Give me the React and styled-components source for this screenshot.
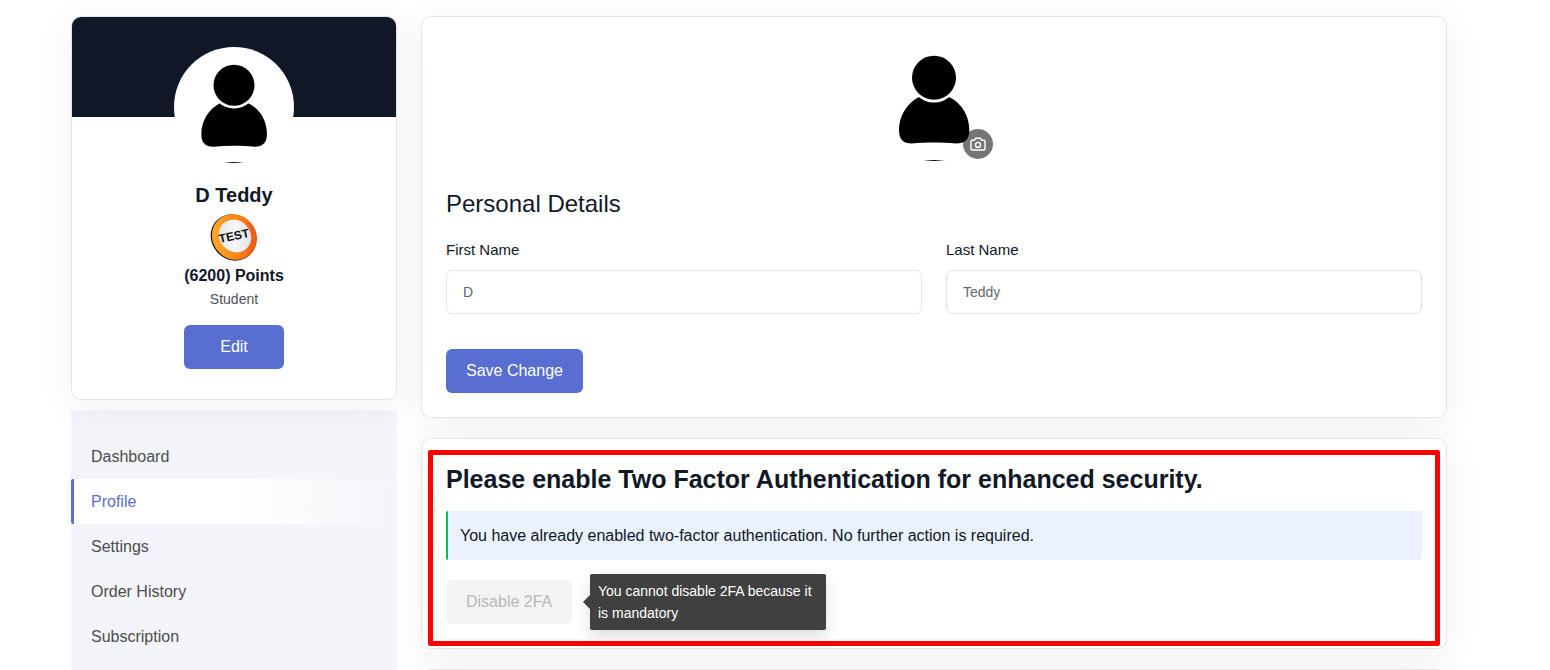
import React, { useId } from "react";
import styled, { createGlobalStyle } from "styled-components";

const GlobalStyle = createGlobalStyle`
  *, *::before, *::after { box-sizing: border-box; }
  body {
    margin: 0;
    background: #fff;
    color: #101828;
    font-family: "Liberation Sans", Arial, sans-serif;
    font-size: 16px;
    line-height: 24px;
  }
  h1, h2, p, ul { margin: 0; padding: 0; }
  button, input { font: inherit; }
`;

const Page = styled.div`
  display: grid;
  grid-template-columns: 326px minmax(0, 1fr);
  gap: 24px;
  align-items: start;
  padding: 16px 103px 0 71px;
`;

const Column = styled.div`
  display: flex;
  flex-direction: column;
  gap: ${(p) => p.$gap}px;
`;

const Card = styled.section`
  position: relative;
  border: 1px solid #e2e4e6;
  border-radius: 10px;
  background: #fff;
  box-shadow: 0 6px 40px rgba(30, 30, 90, 0.06);
`;

const ProfileCard = styled(Card)`
  z-index: 1;
  display: flex;
  flex-direction: column;
  align-items: center;
  padding-bottom: 30px;
  overflow: hidden;
  text-align: center;
`;

const Banner = styled.div`
  align-self: stretch;
  height: 100px;
  background: #101827;
`;

const AvatarRing = styled.div`
  position: relative;
  width: 120px;
  height: 120px;
  margin-top: -70px;
  padding: 4px;
  border-radius: 50%;
  background: #fff;

  svg { display: block; }
`;

const ProfileName = styled.h2`
  margin-top: 16px;
  font-size: 20px;
  line-height: 24px;
`;

const Badge = styled.svg`
  display: block;
  margin-top: 7px;
`;

const Points = styled.p`
  font-weight: 700;
  line-height: 28px;
`;

const Role = styled.p`
  color: #4d5259;
  font-size: 14px;
  line-height: 18px;
`;

const Button = styled.button`
  height: 44px;
  padding: 0 20px;
  border: 0;
  border-radius: 6px;
  background: #586fd1;
  color: #fff;

  &:disabled {
    background: #f4f4f4;
    color: #b8b8b8;
  }
`;

const EditButton = styled(Button)`
  width: 100px;
  margin-top: 17px;
`;

const Menu = styled.nav`
  padding: 24px 0 48px;
  border-radius: 3px;
  background: #f4f5fa;

  ul { list-style: none; }
`;

const MenuLink = styled.a`
  display: block;
  height: 45px;
  padding-left: 17px;
  border-left: 3px solid ${(p) => (p.$active ? "#586fd1" : "transparent")};
  border-radius: 2px;
  background: ${(p) => (p.$active ? "linear-gradient(90deg, #fff 50%, #f4f5fa)" : "none")};
  color: ${(p) => (p.$active ? "#586fd1" : "#4d4d4d")};
  line-height: 45px;
  text-decoration: none;
`;

const DetailsCard = styled(Card)`
  padding: 24px;
`;

const Photo = styled.div`
  position: relative;
  width: 120px;
  height: 120px;
  margin: 0 auto;

  svg { display: block; }
`;

const PhotoButton = styled.button`
  position: absolute;
  right: 1px;
  bottom: 2px;
  display: grid;
  place-items: center;
  width: 30px;
  height: 30px;
  padding: 0;
  border: 0;
  border-radius: 50%;
  background: rgba(0, 0, 0, 0.54);
  color: #fff;
`;

const SectionTitle = styled.h2`
  margin-top: 27px;
  font-size: 24px;
  font-weight: 400;
  line-height: 32px;
`;

const Fields = styled.div`
  display: grid;
  grid-template-columns: 1fr 1fr;
  gap: 24px;
  margin: 18px 0 35px;
`;

const Field = styled.div`
  display: flex;
  flex-direction: column;
  gap: 8px;

  label {
    font-size: 15px;
    line-height: 24px;
  }

  input {
    width: 100%;
    height: 44px;
    padding: 0 16px;
    border: 1px solid #e2e4e6;
    border-radius: 6px;
    background: #fff;
    color: #61666e;
    font-size: 14px;
  }
`;

const SecurityTitle = styled.h1`
  font-size: 25px;
  line-height: 32px;
`;

const Alert = styled.p`
  margin: 16px 0 20px;
  padding: 12px;
  border-left: 2px solid #08c152;
  border-radius: 2px;
  background: #eaf1ff;
  line-height: 25px;
`;

const Actions = styled.div`
  position: relative;
  display: flex;
`;

const Tooltip = styled.div`
  position: absolute;
  top: -6px;
  left: 144px;
  width: 236px;
  padding: 6px 8px;
  border-radius: 2px;
  background: #404040;
  box-shadow: 0 6px 16px rgba(0, 0, 0, 0.14);
  color: #fff;
  font-size: 14px;
  line-height: 22px;

  &::before {
    content: "";
    position: absolute;
    top: 21px;
    left: -7px;
    border: solid transparent;
    border-width: 7px 7px 7px 0;
    border-right-color: #404040;
  }
`;

const Highlight = styled.div`
  position: absolute;
  inset: 11px 6px 2px;
  border: 5px solid #f00;
  border-radius: 2px;
  pointer-events: none;
`;

const SecurityCard = styled(Card)`
  padding: 24px;
`;

const NextCard = styled(Card)`
  height: 48px;
`;

function Person({ size }) {
  const clip = useId();
  return (
    <svg width={size} height={size} viewBox="0 0 120 120" aria-hidden="true">
      <clipPath id={clip}>
        <circle cx="60" cy="60" r="60" />
      </clipPath>
      <g clipPath={`url(#${clip})`}>
        <circle cx="60" cy="60" r="60" fill="#fff" />
        <path d="M45 56C33 62 25 75 25 89C25 98.500 29 102.500 38 102.500C52 101.300 68 101.300 82 102.500C91 102.500 95.300 98.500 95.300 89C95.300 75 88 62 75 56Z" />
        <circle cx="60" cy="37" r="24.500" fill="#fff" />
        <circle cx="60" cy="36.700" r="22" />
        <path d="M46 120Q60 118 74 120Z" fill="#0c0c18" />
      </g>
    </svg>
  );
}

function Camera() {
  return (
    <svg width="16" height="16" viewBox="0 0 16 16" fill="none" stroke="currentColor" strokeWidth="1.400" strokeLinejoin="round" aria-hidden="true">
      <path d="M2 4.300H4.500L5.500 2.200H10.500L11.500 4.300H14Q15 4.300 15 5.300V13Q15 14 14 14H2Q1 14 1 13V5.300Q1 4.300 2 4.300Z" />
      <circle cx="8" cy="8.900" r="2.500" />
    </svg>
  );
}

function TestBadge() {
  const id = useId();
  return (
    <Badge width="48" height="48" viewBox="0 0 48 48" role="img" aria-label="Test badge">
      <defs>
        <linearGradient id={`${id}r`} x1="0" y1="0" x2="1" y2="1">
          <stop offset="0" stopColor="#ffb52b" />
          <stop offset="0.500" stopColor="#fb8c1d" />
          <stop offset="1" stopColor="#e2420f" />
        </linearGradient>
        <linearGradient id={`${id}c`} x1="0" y1="0" x2="1" y2="1">
          <stop offset="0" stopColor="#dedede" />
          <stop offset="0.500" stopColor="#f6f6f6" />
          <stop offset="1" stopColor="#dcdcdc" />
        </linearGradient>
      </defs>
      <ellipse cx="23.500" cy="23.500" rx="22" ry="24" fill="#2a1b12" transform="rotate(-42 23.500 23.500)" />
      <ellipse cx="24.500" cy="23" rx="21.800" ry="23.500" fill={`url(#${id}r)`} transform="rotate(-42 24.500 23)" />
      <ellipse cx="25" cy="22" rx="15.500" ry="17" fill={`url(#${id}c)`} transform="rotate(-42 25 22)" />
      <text x="24" y="26" textAnchor="middle" fontFamily="Liberation Sans" fontWeight="700" fontSize="12" fill="#111" transform="rotate(-12 24 22)">TEST</text>
    </Badge>
  );
}

const links = ["Dashboard", "Profile", "Settings", "Order History", "Subscription"];

export default function App() {
  return (
    <>
      <GlobalStyle />
      <Page>
        <Column as="aside" $gap={10}>
          <ProfileCard>
            <Banner />
            <AvatarRing>
              <Person size={112} />
            </AvatarRing>
            <ProfileName>D Teddy</ProfileName>
            <TestBadge />
            <Points>(6200) Points</Points>
            <Role>Student</Role>
            <EditButton type="button">Edit</EditButton>
          </ProfileCard>
          <Menu aria-label="Account">
            <ul>
              {links.map((name) => (
                <li key={name}>
                  <MenuLink href="#" $active={name === "Profile"}>{name}</MenuLink>
                </li>
              ))}
            </ul>
          </Menu>
        </Column>
        <Column as="main" $gap={20}>
          <DetailsCard>
            <Photo>
              <Person size={120} />
              <PhotoButton type="button" aria-label="Change photo">
                <Camera />
              </PhotoButton>
            </Photo>
            <SectionTitle>Personal Details</SectionTitle>
            <Fields>
              <Field>
                <label htmlFor="first-name">First Name</label>
                <input id="first-name" defaultValue="D" />
              </Field>
              <Field>
                <label htmlFor="last-name">Last Name</label>
                <input id="last-name" defaultValue="Teddy" />
              </Field>
            </Fields>
            <Button type="button">Save Change</Button>
          </DetailsCard>
          <SecurityCard>
            <SecurityTitle>Please enable Two Factor Authentication for enhanced security.</SecurityTitle>
            <Alert>You have already enabled two-factor authentication. No further action is required.</Alert>
            <Actions>
              <Button type="button" disabled aria-describedby="mandatory-tip">Disable 2FA</Button>
              <Tooltip id="mandatory-tip" role="tooltip">You cannot disable 2FA because it is mandatory</Tooltip>
            </Actions>
            <Highlight />
          </SecurityCard>
          <NextCard />
        </Column>
      </Page>
    </>
  );
}
